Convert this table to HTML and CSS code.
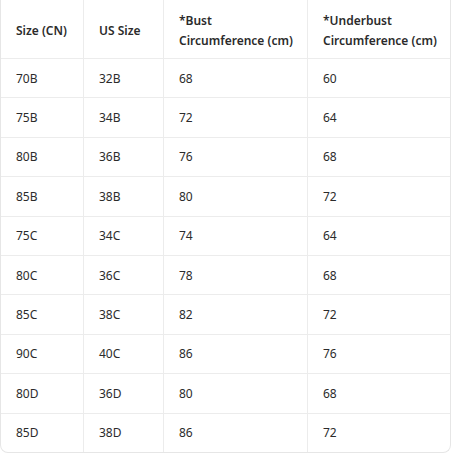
FILE: index.html
```html
<!DOCTYPE html>
<html>
<head>
<meta charset="utf-8">
<link rel="stylesheet" href="styles.css">
</head>
<body>
<div class="wrap">
<table class="sizes">
<thead>
<tr><th class="c1">Size (CN)</th><th class="c2">US Size</th><th class="c3">*Bust<br>Circumference (cm)</th><th class="c4">*Underbust<br>Circumference (cm)</th></tr>
</thead>
<tbody>
<tr><td>70B</td><td>32B</td><td>68</td><td>60</td></tr>
<tr><td>75B</td><td>34B</td><td>72</td><td>64</td></tr>
<tr><td>80B</td><td>36B</td><td>76</td><td>68</td></tr>
<tr><td>85B</td><td>38B</td><td>80</td><td>72</td></tr>
<tr><td>75C</td><td>34C</td><td>74</td><td>64</td></tr>
<tr><td>80C</td><td>36C</td><td>78</td><td>68</td></tr>
<tr><td>85C</td><td>38C</td><td>82</td><td>72</td></tr>
<tr><td>90C</td><td>40C</td><td>86</td><td>76</td></tr>
<tr><td>80D</td><td>36D</td><td>80</td><td>68</td></tr>
<tr><td>85D</td><td>38D</td><td>86</td><td>72</td></tr>
</tbody>
</table>
</div>
</body>
</html>
```
FILE: styles.css
```css
html, body {
  margin: 0;
  padding: 0;
  background: #ffffff;
}
.wrap {
  width: 449px;
  border: 1px solid #e6e6e6;
  border-top: none;
  border-radius: 0 0 8px 8px;
  overflow: hidden;
  font-family: "Noto Sans", "Open Sans", sans-serif;
  color: #2b2b2b;
  font-size: 12px;
}
.sizes {
  width: 100%;
  border-collapse: collapse;
  table-layout: fixed;
}
.sizes th, .sizes td {
  text-align: left;
  padding: 0 0 0 15px;
  border-right: 1px solid #ececec;
  border-bottom: 1px solid #ececec;
  vertical-align: middle;
}
.sizes th:last-child, .sizes td:last-child {
  border-right: none;
}
.sizes tbody tr:last-child td {
  border-bottom: none;
}
.sizes th {
  font-weight: 600;
  height: 55px;
  padding-top: 3px;
  line-height: 20px;
}
.sizes td {
  height: 38.4px;
  font-weight: 400;
}
.c1 { width: 67px; }
.c2 { width: 64px; }
.c3 { width: 128px; }
.c4 { width: auto; }
```
